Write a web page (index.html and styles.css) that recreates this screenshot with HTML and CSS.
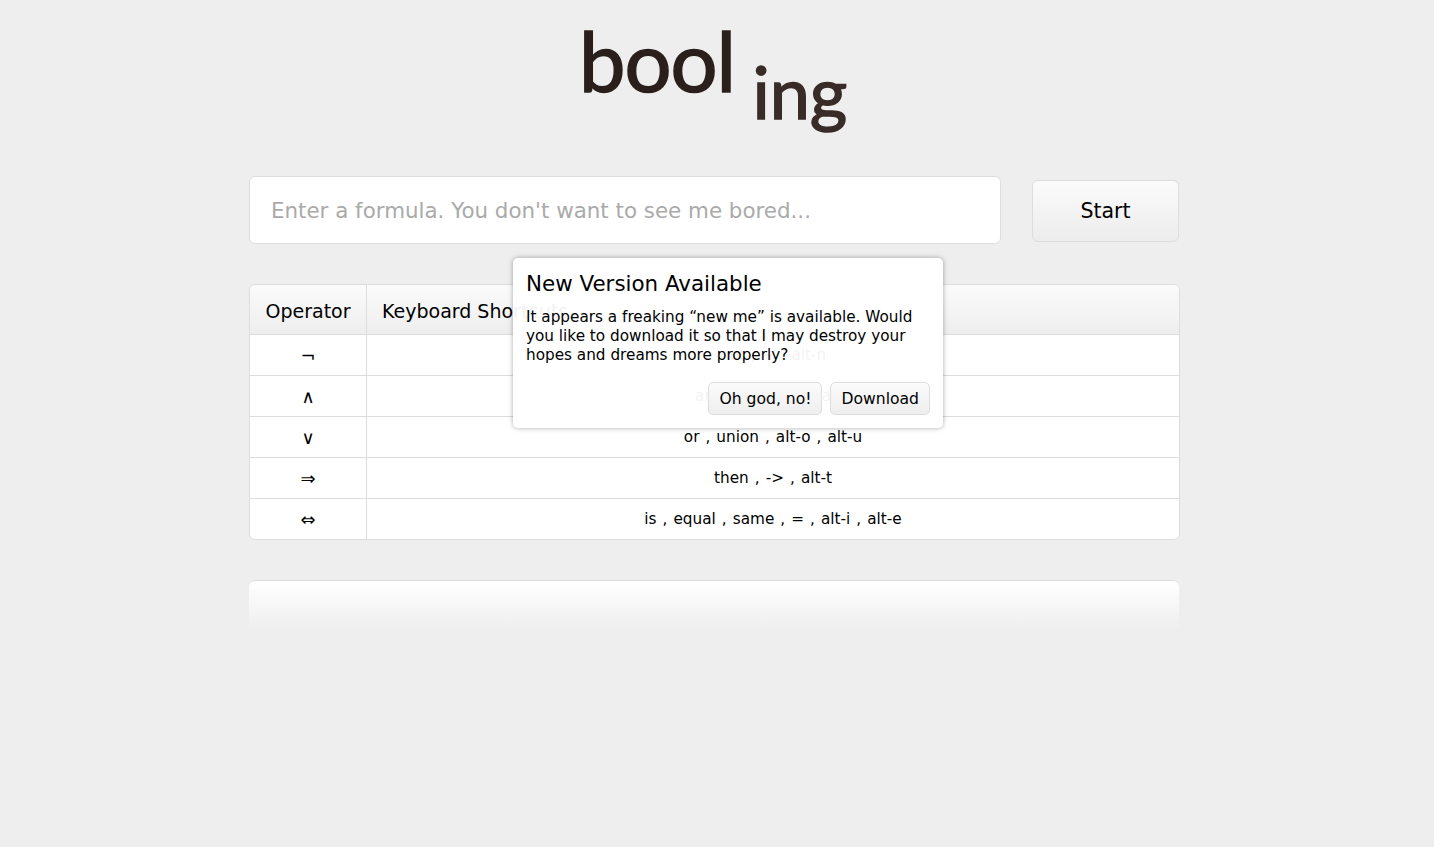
FILE: index.html
```html
<!DOCTYPE html>
<html lang="en">
<head>
  <meta charset="UTF-8" />
  <title>bool ing</title>
  <link rel="stylesheet" href="styles.css">
</head>
<body>
<div class="container">
  <h1 class="logo"><span class="logo-main">bool</span> <span class="logo-sub">ing</span></h1>

  <div class="formula">
    <input type="text" class="formula-input" placeholder="Enter a formula. You don't want to see me bored..." />
    <button class="start">Start</button>
  </div>

  <table class="operators">
    <thead>
      <tr><th class="op">Operator</th><th>Keyboard Shortcuts</th></tr>
    </thead>
    <tbody>
      <tr><td class="op">¬</td><td>not , ~ , alt-n</td></tr>
      <tr><td class="op">∧</td><td>and , ^ , alt-a , alt-i</td></tr>
      <tr><td class="op">∨</td><td>or , union , alt-o , alt-u</td></tr>
      <tr><td class="op">⇒</td><td>then , -&gt; , alt-t</td></tr>
      <tr><td class="op">⇔</td><td>is , equal , same , = , alt-i , alt-e</td></tr>
    </tbody>
  </table>

  <div class="results"></div>
</div>

<div class="dialog">
  <h3>New Version Available</h3>
  <p>It appears a freaking “new me” is available. Would you like to download it so that I may destroy your hopes and dreams more properly?</p>
  <div class="dialog-buttons">
    <button>Oh god, no!</button>
    <button>Download</button>
  </div>
</div>
</body>
</html>
```

FILE: styles.css
```css
* {
  box-sizing: border-box;
}
html, body {
  height: 100%;
}
body {
  margin: 0;
  padding-right: 6px;
  background: #eee;
  font-family: "DejaVu Sans", sans-serif;
  color: #000;
  overflow: hidden;
}
.container {
  width: 930px;
  margin: 0 auto;
  padding-top: 12px;
}
.logo {
  margin: 0;
  height: 164px;
  padding-left: 330px;
  font-family: Lato, sans-serif;
  font-weight: 400;
  line-height: 96px;
  white-space: nowrap;
  color: #2a1f1b;
  -webkit-text-stroke: 1.5px currentColor;
}
.logo-main {
  font-size: 83px;
  letter-spacing: -1px;
}
.logo-sub {
  font-size: 72px;
  margin-left: 9px;
  vertical-align: -27px;
  color: #392b27;
}
.formula {
  display: flex;
  align-items: flex-start;
  justify-content: space-between;
  height: 68px;
  margin-bottom: 40px;
}
.formula-input {
  width: 752px;
  height: 68px;
  padding: 0 21px;
  background: #fff;
  border: 1px solid #ddd;
  border-radius: 6px;
  font-family: inherit;
  font-size: 21.4px;
  outline: none;
}
.formula-input::placeholder {
  color: #aaa;
  opacity: 1;
}
.start {
  width: 147px;
  height: 62px;
  margin-top: 4px;
  background: linear-gradient(#fbfbfb, #ececec);
  border: 1px solid #ddd;
  border-radius: 6px;
  font-family: inherit;
  font-size: 20.5px;
  color: #000;
}
.operators {
  width: 931px;
  border-collapse: separate;
  border-spacing: 0;
  background: #fff;
  border: 1px solid #ddd;
  border-radius: 6px;
  overflow: hidden;
  table-layout: fixed;
}
.operators th {
  height: 50px;
  padding: 2px 15px 0;
  text-align: left;
  font-size: 19px;
  font-weight: 400;
  background: linear-gradient(#fbfbfb, #eee);
  border-bottom: 1px solid #ddd;
}
.operators td {
  height: 41px;
  padding: 0;
  text-align: center;
  font-size: 15.25px;
  word-spacing: 1.2px;
  border-bottom: 1px solid #ddd;
}
.operators tr:last-child td {
  height: 40px;
  border-bottom: none;
}
.operators .op {
  width: 117px;
  border-right: 1px solid #ddd;
}
.operators td.op {
  padding-top: 1px;
  font-size: 18px;
}
.operators th.op {
  text-align: center;
  padding: 2px 0 0;
}
.results {
  height: 50px;
  margin-top: 40px;
  background: linear-gradient(#fff, #eee);
  border-top: 1px solid #ddd;
  border-radius: 6px 6px 0 0;
}
.dialog {
  position: absolute;
  left: 513px;
  top: 258px;
  width: 430px;
  height: 170px;
  padding: 11px 13px;
  background: rgba(255, 255, 255, 0.95);
  border-radius: 5px;
  box-shadow: 0 0 5px rgba(0, 0, 0, 0.35);
}
.dialog h3 {
  margin: 0 0 9px;
  font-size: 21.4px;
  line-height: 30px;
  font-weight: 400;
}
.dialog p {
  margin: 0;
  font-size: 15.25px;
  line-height: 19px;
}
.dialog-buttons {
  display: flex;
  justify-content: flex-end;
  gap: 8px;
  margin-top: 17px;
}
.dialog-buttons button {
  height: 33px;
  padding: 0 10px;
  background: linear-gradient(#fbfbfb, #eee);
  border: 1px solid #ddd;
  border-radius: 5px;
  font-family: inherit;
  font-size: 15.6px;
  color: #000;
}
```
